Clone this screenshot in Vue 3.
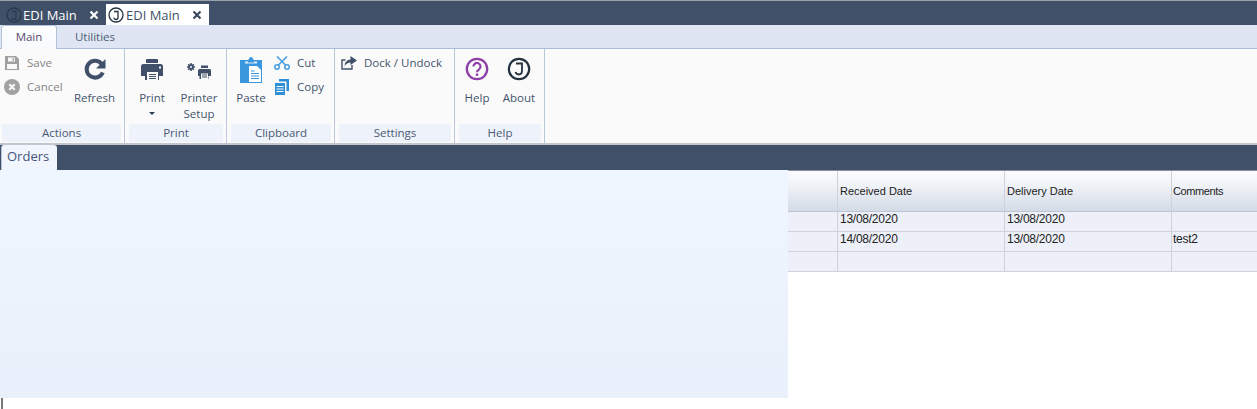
<script setup>
const rows = [
  ['13/08/2020', '13/08/2020', ''],
  ['14/08/2020', '13/08/2020', 'test2'],
  ['', '', ''],
]
</script>

<template>
  <div class="app">
    <div class="doc-tabs">
      <div class="doc-tab">
        <svg class="j" viewBox="0 0 16 16"><circle cx="8" cy="8" r="7" fill="none" stroke="#2a3a4e" stroke-width="1.300"/><path d="M6 4.500h4v6q0 2-2 2t-2.400-1.800" fill="none" stroke="#2a3a4e" stroke-width="1.300"/></svg>
        <span class="doc-name">EDI Main</span>
        <svg class="x" viewBox="0 0 10 10"><path d="M1.500 1.500l7 7M8.500 1.500l-7 7" stroke="#fff" stroke-width="2.200"/></svg>
      </div>
      <div class="doc-tab active">
        <svg class="j" viewBox="0 0 16 16"><circle cx="8" cy="8" r="7" fill="none" stroke="#24323f" stroke-width="1.300"/><path d="M6 4.500h4v6q0 2-2 2t-2.400-1.800" fill="none" stroke="#24323f" stroke-width="1.300"/></svg>
        <span class="doc-name">EDI Main</span>
        <svg class="x" viewBox="0 0 10 10"><path d="M1.500 1.500l7 7M8.500 1.500l-7 7" stroke="#3b4a5e" stroke-width="2.200"/></svg>
      </div>
    </div>

    <div class="ribbon-tabs">
      <div class="rtab active">Main</div>
      <div class="rtab">Utilities</div>
    </div>

    <div class="ribbon">
      <section class="group g1">
        <div class="body">
          <div class="stack s-actions">
            <div class="small off">
              <svg class="ic-save" viewBox="0 0 14 14"><path d="M0 0h11l3 3v11H0z" fill="#a0a0a0"/><path d="M3 1.500h7v4H3z" fill="#fafafa"/><path d="M7.500 2.200h1.600v2.600H7.500z" fill="#a0a0a0"/><path d="M2 8h10v5H2z" fill="#fafafa"/></svg>
              <span>Save</span>
            </div>
            <div class="small off">
              <svg class="ic-cancel" viewBox="0 0 16 16"><circle cx="8" cy="8" r="8" fill="#a2a2a2"/><path d="M5.300 5.300l5.400 5.400M10.700 5.300l-5.400 5.400" stroke="#f5f5f5" stroke-width="2.200"/></svg>
              <span>Cancel</span>
            </div>
          </div>
          <div class="large w-refresh">
            <svg class="ic ic-refresh" viewBox="0 0 24 24"><path d="M19.800 15.500a8.400 8.400 0 1 1-.9-8.200" fill="none" stroke="#3f5068" stroke-width="4"/><path d="M22.500 2v9.500h-9.500z" fill="#3f5068"/></svg>
            <span>Refresh</span>
          </div>
        </div>
        <div class="label">Actions</div>
      </section>

      <section class="group g2">
        <div class="body">
          <div class="large w-print">
            <svg class="ic" viewBox="0 0 24 24"><path d="M7 2h10q1 0 1 1v3H6V3q0-1 1-1z" fill="#3f5068"/><path d="M3.500 7h17q2.500 0 2.500 2.500V19h-4v4H5v-4H1V9.500Q1 7 3.500 7z" fill="#3f5068"/><path d="M7 15h11v8.500H7z" fill="#fafafa"/><path d="M9 17.500h7M9 19.500h7M9 21.500h7" stroke="#3f5068"/><path d="M19 9.500h2v2h-2z" fill="#fafafa"/></svg>
            <span>Print</span>
            <i class="caret"></i>
          </div>
          <div class="large w-setup">
            <svg class="ic" viewBox="0 0 24 24"><path d="M4 6v8M0 10h8M1.200 7.200l5.600 5.600M6.800 7.200l-5.600 5.600" stroke="#3f5068" stroke-width="1.500"/><circle cx="4" cy="10" r="2.800" fill="#3f5068"/><circle cx="4" cy="10" r="1" fill="#fafafa"/><path d="M14 8.500h7v2.500h-7z" fill="#3f5068"/><path d="M12.500 12h10q1.500 0 1.500 1.500V19h-2.500v3h-9v-3H11v-5.500Q11 12 12.500 12z" fill="#3f5068"/><path d="M14 16.500h7V22h-7z" fill="#fafafa"/><path d="M15 18h5M15 20h5" stroke="#3f5068"/></svg>
            <span>Printer</span>
            <span>Setup</span>
          </div>
        </div>
        <div class="label">Print</div>
      </section>

      <section class="group g3">
        <div class="body">
          <div class="large w-paste">
            <svg class="ic-paste" viewBox="0 0 22 26"><path d="M0 3h22v23H0z" fill="#3a97de"/><path d="M5 4.500h12v2H5z" fill="#d9ecfa"/><path d="M8 2.500h6v3H8z" fill="#3a97de"/><circle cx="11" cy="2" r="2" fill="#3a97de"/><path d="M9 9h8l4 4v12H9z" fill="#fff"/><path d="M11 14h3.500M11 16.500h8M11 19h8M11 21.500h8" stroke="#3a97de"/></svg>
            <span>Paste</span>
          </div>
          <div class="stack s-clip">
            <div class="small">
              <svg class="ic-cut" viewBox="0 0 16 14"><path d="M3 .5l9 9M13 .5l-9 9" stroke="#4a9fe0" stroke-width="1.600" fill="none"/><circle cx="3" cy="11" r="2.200" fill="none" stroke="#4a9fe0" stroke-width="1.600"/><circle cx="13" cy="11" r="2.200" fill="none" stroke="#4a9fe0" stroke-width="1.600"/></svg>
              <span>Cut</span>
            </div>
            <div class="small">
              <svg class="ic-copy" viewBox="0 0 14 16"><path d="M4 0h10v12h-2.500V2.500H4z" fill="#2f8fd6"/><path d="M0 4h10v12H0z" fill="#2f8fd6"/><path d="M1.500 7.500h7M1.500 10h7M1.500 12.500h7" stroke="#fff"/></svg>
              <span>Copy</span>
            </div>
          </div>
        </div>
        <div class="label">Clipboard</div>
      </section>

      <section class="group g4">
        <div class="body">
          <div class="small dock">
            <svg class="ic-dock" viewBox="0 0 16 14"><path d="M4.500 4H1v9h10V9" fill="none" stroke="#3f5068" stroke-width="1.400"/><path d="M9.500 0l6.500 4.500-6.500 4.500V6.500Q6 6.500 3.500 10q.5-6 6-6.500z" fill="#3f5068"/></svg>
            <span>Dock / Undock</span>
          </div>
        </div>
        <div class="label">Settings</div>
      </section>

      <section class="group g5">
        <div class="body">
          <div class="large w-help">
            <svg class="ic" viewBox="0 0 24 24"><circle cx="12" cy="12" r="10.200" fill="none" stroke="#8e3fa8" stroke-width="2.300"/><path d="M8.500 9.500a3.500 3.500 0 1 1 5.600 2.800q-2.100 1.400-2.100 3" fill="none" stroke="#8e3fa8" stroke-width="2.200"/><path d="M10.800 16.500h2.400v2.400h-2.400z" fill="#8e3fa8"/></svg>
            <span>Help</span>
          </div>
          <div class="large w-about">
            <svg class="ic" viewBox="0 0 24 24"><circle cx="12" cy="12" r="10.200" fill="none" stroke="#24323f" stroke-width="2.200"/><path d="M9 6.500h6V14q0 3.500-3.200 3.500-2.600 0-3.300-2.400" fill="none" stroke="#24323f" stroke-width="1.800"/></svg>
            <span>About</span>
          </div>
        </div>
        <div class="label">Help</div>
      </section>
    </div>

    <div class="page-tabs">
      <div class="page-tab">Orders</div>
    </div>

    <div class="content">
      <div class="panel"></div>
      <div class="grid">
        <div class="row head">
          <div class="cell c0"></div>
          <div class="cell c1">Received Date</div>
          <div class="cell c2">Delivery Date</div>
          <div class="cell c3">Comments</div>
        </div>
        <div class="row" v-for="(r, i) in rows" :key="i">
          <div class="cell c0"></div>
          <div class="cell c1">{{ r[0] }}</div>
          <div class="cell c2">{{ r[1] }}</div>
          <div class="cell c3">{{ r[2] }}</div>
        </div>
      </div>
    </div>
    <i class="cursor"></i>
  </div>
</template>

<style>
html, body { margin: 0; background: #fff; overflow: hidden; }
</style>

<style scoped>
.app { width: 1257px; height: 409px; overflow: hidden; font-family: "Open Sans", "Noto Sans", sans-serif; font-size: 11.5px; color: #44546c; background: #fff; }

.doc-tabs { height: 25px; box-sizing: border-box; background: #3f5068; border-top: 1px solid #9aa3ad; padding: 3px 0 0 3px; display: flex; }
.doc-tab { width: 103px; height: 21px; box-sizing: border-box; display: flex; align-items: center; gap: 1px; color: #fff; font-size: 13px; padding-left: 3px; }
.doc-tab.active { background: #fff; color: #3f5068; padding-left: 2px; }
.doc-tab.active .doc-name { margin-left: 1px; }
.doc-tab .j { width: 16px; height: 16px; flex: none; }
.doc-name { width: 63px; flex: none; white-space: nowrap; }
.x { width: 10px; height: 10px; flex: none; margin-left: 2px; }

.ribbon-tabs { height: 24px; box-sizing: border-box; background: #dfe5f2; border-bottom: 1px solid #a9bdd6; display: flex; padding-left: 1px; }
.rtab { width: 76px; text-align: center; line-height: 24px; color: #4d5d76; }
.rtab.active { width: 56px; height: 24px; background: linear-gradient(#fdfdfe, #f7f9fc); border: 1px solid #b3c4da; border-bottom: none; border-radius: 3px 3px 0 0; box-sizing: border-box; line-height: 22px; color: #5b4a6b; }

.ribbon { height: 96px; background: #fafafa; display: flex; box-sizing: border-box; border-bottom: 2px solid #c2c6cc; }
.group { box-sizing: border-box; padding: 0 3px 0 4px; border-right: 1px solid #b9c8dc; display: flex; flex-direction: column; height: 94px; }
.g1 { width: 125px; padding-left: 2px; }
.g2 { width: 102px; }
.g3 { width: 108px; }
.g4 { width: 120px; }
.g5 { width: 90px; }
.body { height: 75px; display: flex; }
.label { height: 18px; background: #eef2fa; text-align: center; line-height: 18px; color: #4a5a74; }

.stack { display: flex; flex-direction: column; }
.small { display: flex; align-items: center; height: 24px; white-space: nowrap; color: #44546c; }
.small span { margin-bottom: 2px; }
.off { color: #858585; }
.s-actions { padding-top: 2px; width: 70px; flex: none; }
.ic-save { width: 14px; height: 14px; margin: 0 8px 0 3px; }
.ic-cancel { width: 16px; height: 16px; margin: 0 7px 0 2px; }
.s-clip { padding-top: 2px; margin-left: 3px; }
.ic-cut { width: 16px; height: 14px; margin-right: 7px; }
.ic-copy { width: 14px; height: 16px; margin: 0 8px 0 1px; }
.dock { height: 24px; padding: 2px 0 0 2px; }
.ic-dock { width: 16px; height: 14px; margin-right: 7px; }

.large { display: flex; flex-direction: column; align-items: center; flex: none; line-height: 16px; padding-top: 8px; color: #44546c; }
.large .ic { width: 24px; height: 24px; margin-bottom: 9px; flex: none; }
.large .ic-paste { width: 22px; height: 26px; margin: 0 0 7px; flex: none; }
.w-refresh { width: 45px; }
.w-print { width: 46px; margin-right: 1px; }
.w-setup { width: 46px; }
.w-paste { width: 40px; }
.w-help { width: 36px; }
.w-about { width: 42px; margin-left: 3px; }
.caret { width: 0; height: 0; border: 3px solid transparent; border-top: 3px solid #2a3a4e; border-bottom: 0; margin-top: 6px; }

.page-tabs { height: 25px; background: #3f5068; padding-left: 1px; }
.page-tab { width: 56px; height: 25px; background: #f1f6fe; box-sizing: border-box; padding-left: 5px; line-height: 22px; font-size: 13px; color: #43547a; border-left: 1px solid #b6c3d6; border-radius: 3px 3px 0 0; }

.content { display: flex; height: 228px; align-items: flex-start; }
.panel { width: 788px; height: 228px; flex: none; background: linear-gradient(#f0f6ff, #e8f0fb); }
.grid { flex: 1; font-family: "Liberation Sans", Arial, sans-serif; font-size: 12px; letter-spacing: -.25px; color: #222; border-top: 1px solid #8a8f96; }
.row { display: flex; height: 20px; background: #edf0f8; border-bottom: 1px solid #cfd2d8; box-sizing: border-box; }
.row.head { height: 41px; background: linear-gradient(#fbfcfe 0%, #eef1f6 40%, #d3dbe7 100%); border-bottom: 1px solid #bfc6d2; font-size: 11px; letter-spacing: 0; }
.cell { box-sizing: border-box; border-right: 1px solid #cfd2d8; padding-left: 2px; line-height: 15px; white-space: nowrap; }
.head .cell { line-height: 41px; }
.c0 { width: 50px; }
.c1 { width: 167px; }
.c2 { width: 167px; }
.c3 { flex: 1; border-right: none; padding-left: 1px; }
.head .c3 { letter-spacing: -.4px; }
.cursor { display: block; width: 2px; height: 11px; margin-left: 1px; background: #777; }
</style>
